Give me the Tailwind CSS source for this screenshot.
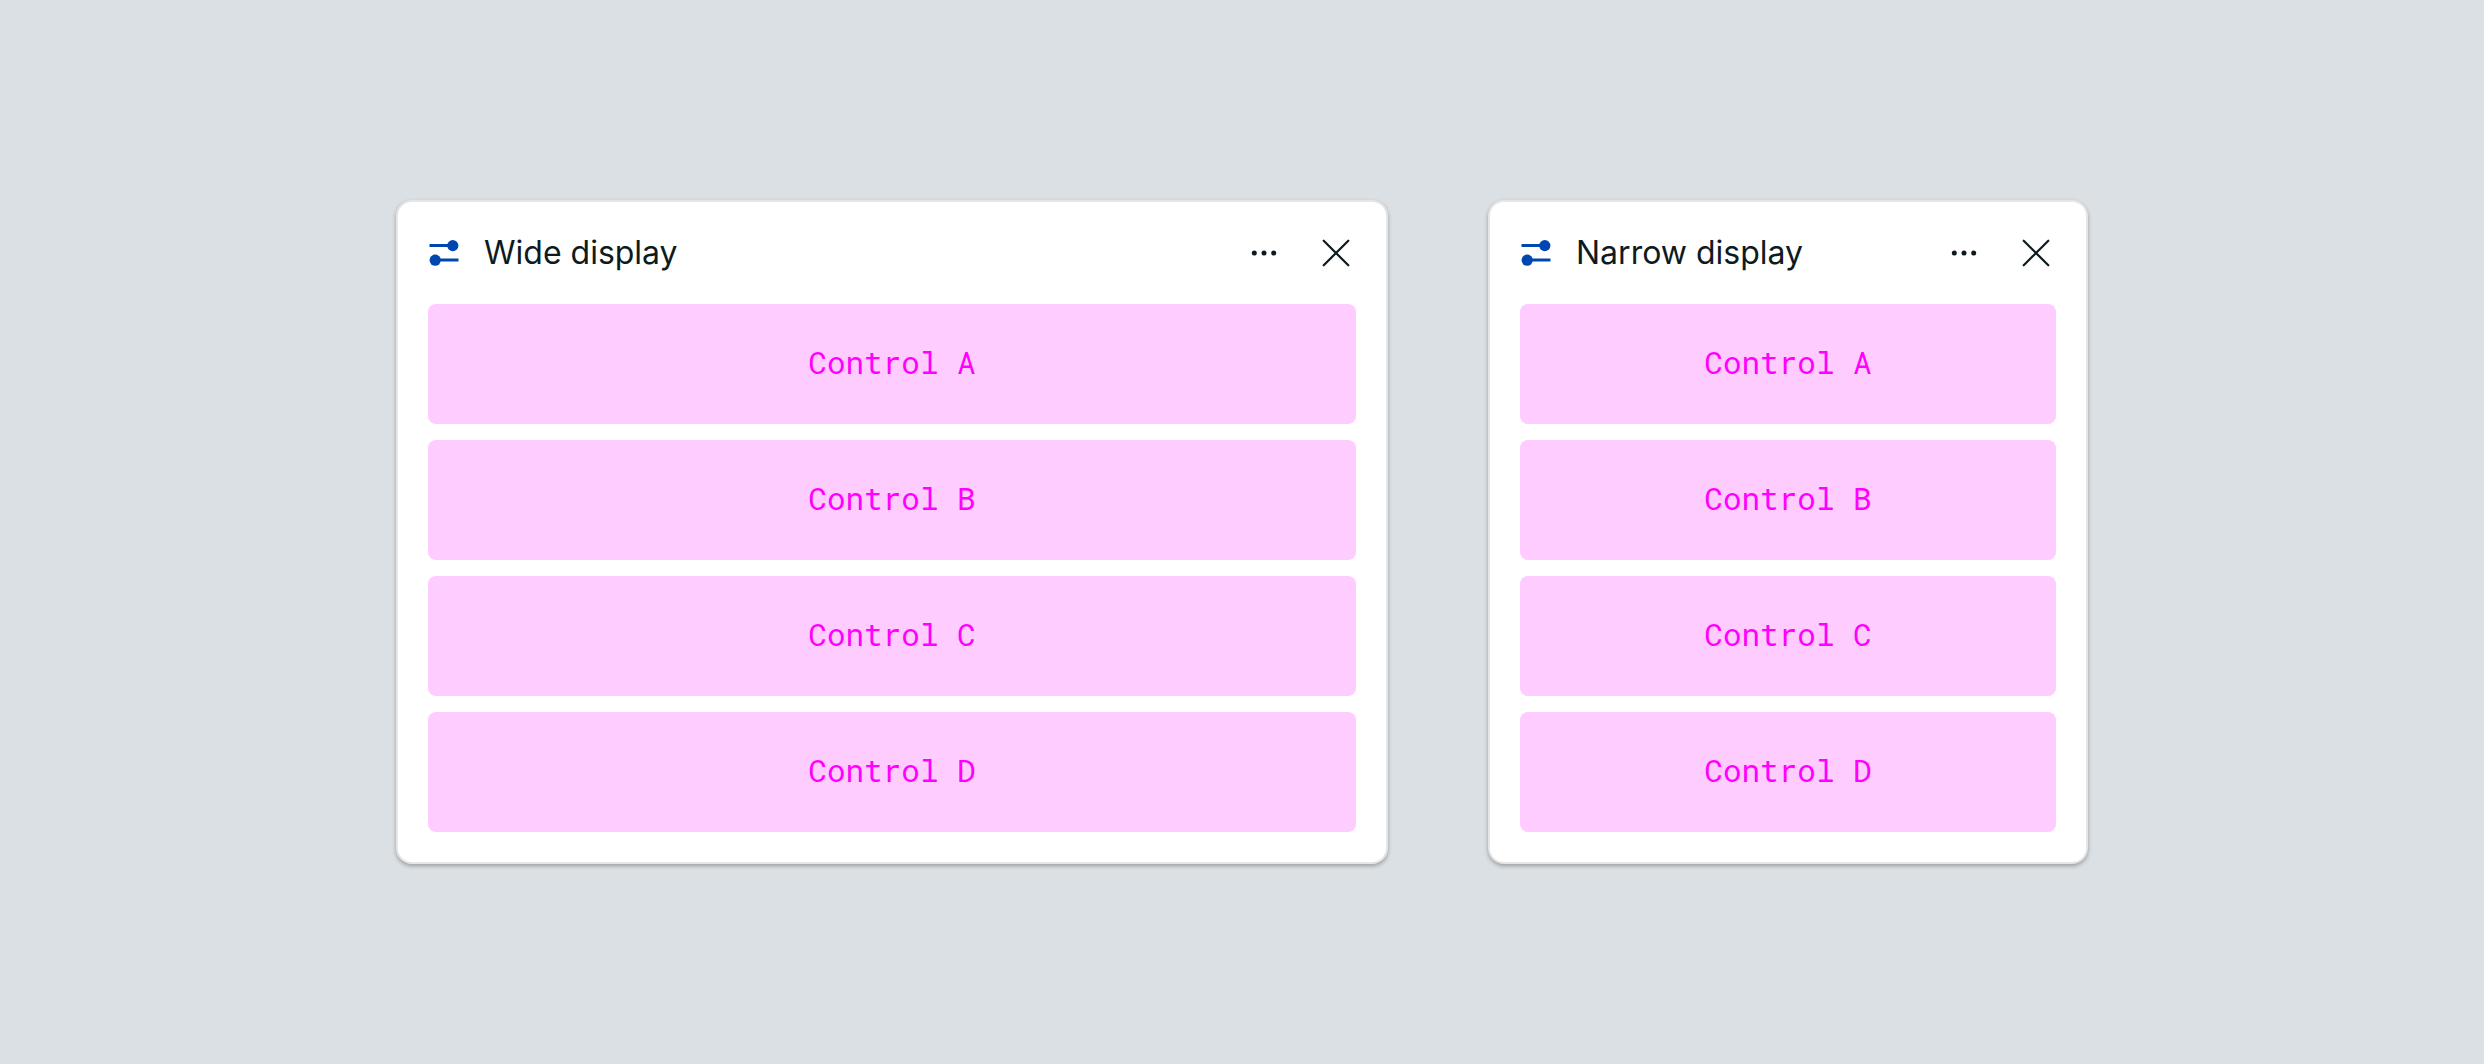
<!DOCTYPE html>
<html lang="en">
<head>
<meta charset="utf-8">
<meta name="viewport" content="width=device-width, initial-scale=1">
<title>Control panels</title>
<script src="https://cdn.jsdelivr.net/npm/@tailwindcss/browser@4"></script>
</head>
<body class="bg-[#dbe0e4] font-['Inter',sans-serif] text-[#0d1b1e]">
<main class="flex min-h-screen items-center justify-center gap-[100px]">
  <section class="w-full max-w-[992px] rounded-2xl border-2 border-[#e6e6e6] bg-white px-[30px] pb-[30px] shadow-[0_2px_4px_rgba(0,0,0,0.3)]">
    <header class="flex h-[102px] items-center">
      <svg class="size-8 shrink-0 text-[#0046b0]" viewBox="0 0 32 32" fill="currentColor" aria-hidden="true"><path d="M1.500 7h23v3h-23zM7.500 21.500h23v3h-23z"/><circle cx="24.800" cy="8.600" r="5.600"/><circle cx="7.200" cy="23.200" r="5.600"/></svg>
      <h2 class="ml-6 grow text-[32px] leading-10">Wide display</h2>
      <div class="flex gap-8">
        <button type="button" aria-label="More options" class="grid size-10 place-items-center"><svg class="size-8" viewBox="0 0 32 32" fill="currentColor" aria-hidden="true"><circle cx="6.300" cy="16" r="2.500"/><circle cx="16" cy="16" r="2.500"/><circle cx="25.700" cy="16" r="2.500"/></svg></button>
        <button type="button" aria-label="Close" class="grid size-10 place-items-center"><svg class="size-8" viewBox="0 0 32 32" fill="none" stroke="currentColor" stroke-width="2.200" stroke-linecap="round" aria-hidden="true"><path d="M3.700 3.700l24.600 24.600M28.300 3.700L3.700 28.300"/></svg></button>
      </div>
    </header>
    <ul class="grid gap-4 text-center font-['Roboto_Mono','Liberation_Mono',monospace] text-[31px] leading-10 text-[#ff00ff]">
      <li class="rounded-lg bg-[#ffccff] pt-[38px] pb-[42px]">Control A</li>
      <li class="rounded-lg bg-[#ffccff] pt-[38px] pb-[42px]">Control B</li>
      <li class="rounded-lg bg-[#ffccff] pt-[38px] pb-[42px]">Control C</li>
      <li class="rounded-lg bg-[#ffccff] pt-[38px] pb-[42px]">Control D</li>
    </ul>
  </section>
  <section class="w-full max-w-[600px] rounded-2xl border-2 border-[#e6e6e6] bg-white px-[30px] pb-[30px] shadow-[0_2px_4px_rgba(0,0,0,0.3)]">
    <header class="flex h-[102px] items-center">
      <svg class="size-8 shrink-0 text-[#0046b0]" viewBox="0 0 32 32" fill="currentColor" aria-hidden="true"><path d="M1.500 7h23v3h-23zM7.500 21.500h23v3h-23z"/><circle cx="24.800" cy="8.600" r="5.600"/><circle cx="7.200" cy="23.200" r="5.600"/></svg>
      <h2 class="ml-6 grow text-[32px] leading-10">Narrow display</h2>
      <div class="flex gap-8">
        <button type="button" aria-label="More options" class="grid size-10 place-items-center"><svg class="size-8" viewBox="0 0 32 32" fill="currentColor" aria-hidden="true"><circle cx="6.300" cy="16" r="2.500"/><circle cx="16" cy="16" r="2.500"/><circle cx="25.700" cy="16" r="2.500"/></svg></button>
        <button type="button" aria-label="Close" class="grid size-10 place-items-center"><svg class="size-8" viewBox="0 0 32 32" fill="none" stroke="currentColor" stroke-width="2.200" stroke-linecap="round" aria-hidden="true"><path d="M3.700 3.700l24.600 24.600M28.300 3.700L3.700 28.300"/></svg></button>
      </div>
    </header>
    <ul class="grid gap-4 text-center font-['Roboto_Mono','Liberation_Mono',monospace] text-[31px] leading-10 text-[#ff00ff]">
      <li class="rounded-lg bg-[#ffccff] pt-[38px] pb-[42px]">Control A</li>
      <li class="rounded-lg bg-[#ffccff] pt-[38px] pb-[42px]">Control B</li>
      <li class="rounded-lg bg-[#ffccff] pt-[38px] pb-[42px]">Control C</li>
      <li class="rounded-lg bg-[#ffccff] pt-[38px] pb-[42px]">Control D</li>
    </ul>
  </section>
</main>
</body>
</html>
